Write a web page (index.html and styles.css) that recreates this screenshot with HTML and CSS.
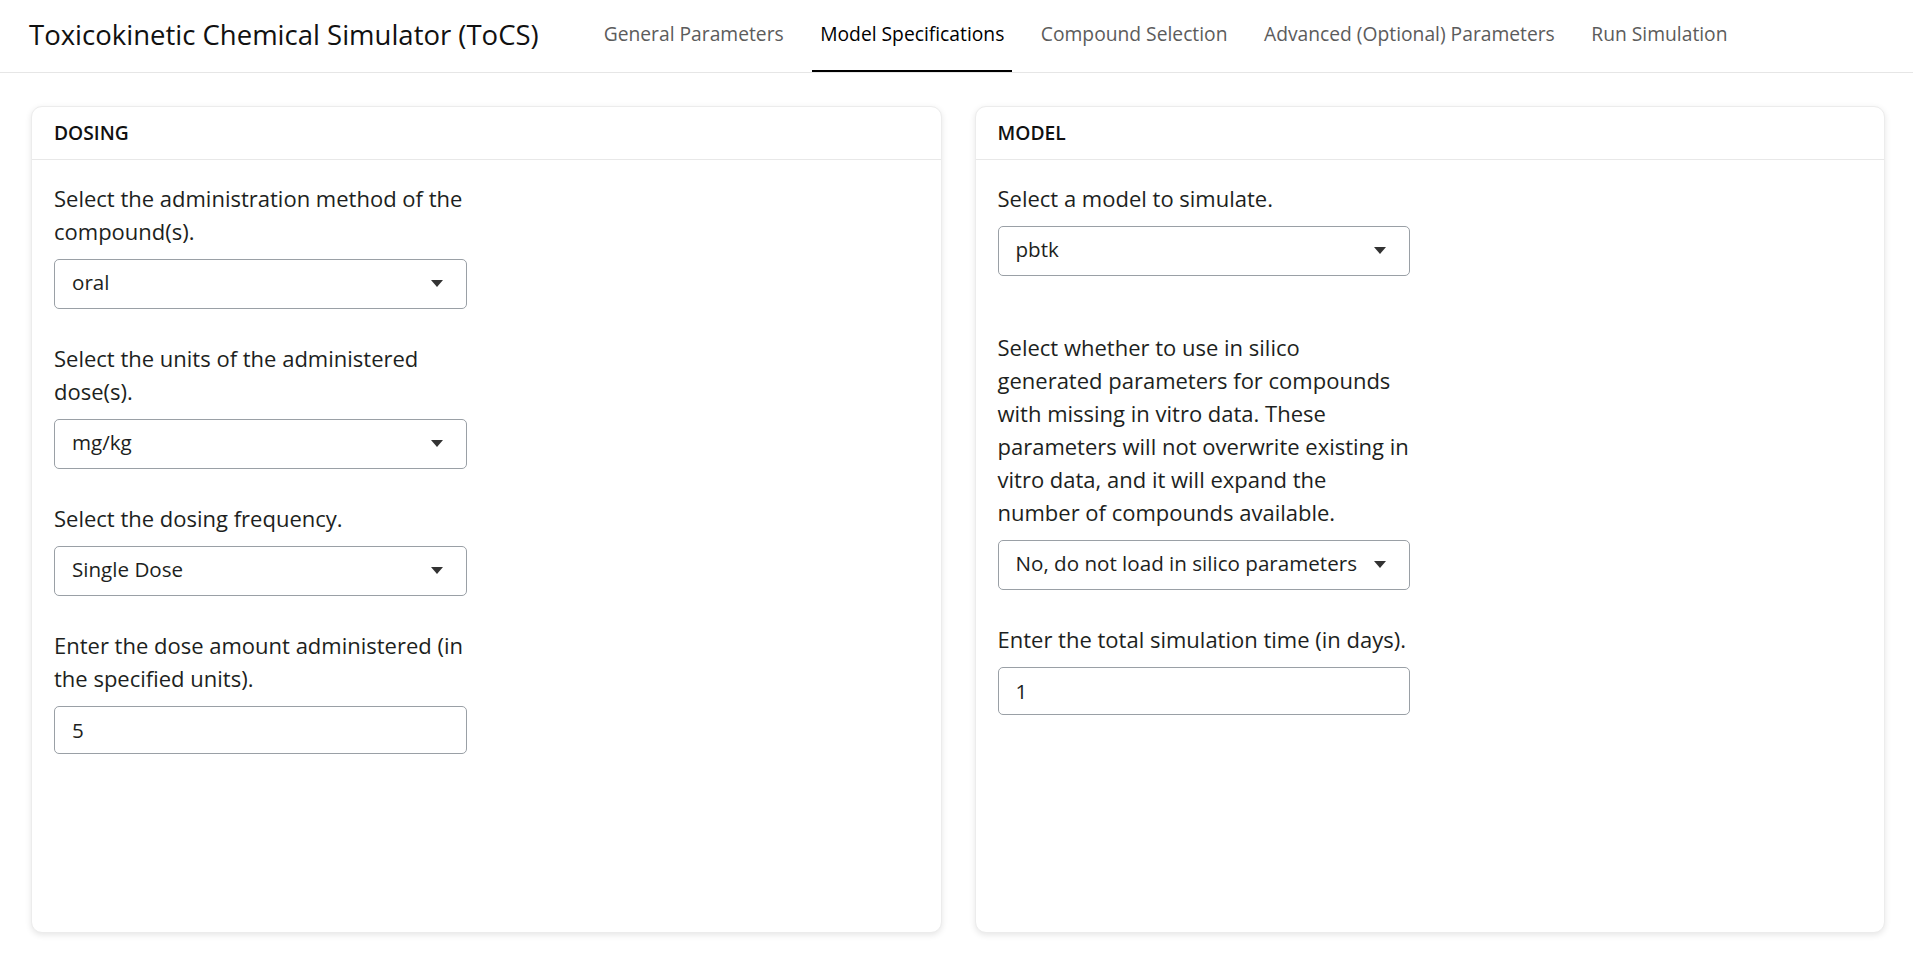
FILE: index.html
```html
<!DOCTYPE html>
<html lang="en">
<head>
<meta charset="utf-8">
<title>Toxicokinetic Chemical Simulator (ToCS)</title>
<link rel="stylesheet" href="styles.css">
</head>
<body>
<header class="navbar">
  <div class="brand">Toxicokinetic Chemical Simulator (ToCS)</div>
  <nav class="nav">
    <a class="nav-link">General Parameters</a>
    <a class="nav-link active">Model Specifications</a>
    <a class="nav-link">Compound Selection</a>
    <a class="nav-link">Advanced (Optional) Parameters</a>
    <a class="nav-link">Run Simulation</a>
  </nav>
</header>
<main class="main">
  <section class="card">
    <div class="card-header">DOSING</div>
    <div class="card-body">
      <div class="form-group">
        <label class="label">Select the administration method of the compound(s).</label>
        <div class="select"><span>oral</span><i class="caret"></i></div>
      </div>
      <div class="form-group">
        <label class="label">Select the units of the administered dose(s).</label>
        <div class="select"><span>mg/kg</span><i class="caret"></i></div>
      </div>
      <div class="form-group">
        <label class="label">Select the dosing frequency.</label>
        <div class="select"><span>Single Dose</span><i class="caret"></i></div>
      </div>
      <div class="form-group">
        <label class="label">Enter the dose amount administered (in the specified units).</label>
        <div class="text-input">5</div>
      </div>
    </div>
  </section>
  <section class="card">
    <div class="card-header">MODEL</div>
    <div class="card-body">
      <div class="form-group">
        <label class="label">Select a model to simulate.</label>
        <div class="select"><span>pbtk</span><i class="caret"></i></div>
      </div>
      <div class="placeholder"></div>
      <div class="form-group">
        <label class="label">Select whether to use in silico generated parameters for compounds with missing in vitro data. These parameters will not overwrite existing in vitro data, and it will expand the number of compounds available.</label>
        <div class="select"><span>No, do not load in silico parameters</span><i class="caret"></i></div>
      </div>
      <div class="form-group">
        <label class="label">Enter the total simulation time (in days).</label>
        <div class="text-input">1</div>
      </div>
    </div>
  </section>
</main>
</body>
</html>
```
FILE: styles.css
```css
html, body {
  height: 100%;
}
body {
  margin: 0;
  font-family: "Open Sans", "DejaVu Sans", sans-serif;
  color: #1d1f21;
  background: #fff;
  display: flex;
  flex-direction: column;
}
.navbar {
  display: flex;
  align-items: center;
  height: 72px;
  border-bottom: 1px solid #e6e6e6;
  padding-left: 29px;
  flex: none;
}
.brand {
  font-size: 27.5px;
  color: #111;
  margin-right: 57px;
  line-height: 1;
  padding-bottom: 3px;
}
.nav {
  display: flex;
  align-self: stretch;
  gap: 20.5px;
}
.nav-link {
  display: flex;
  align-items: center;
  padding: 0 8px 5px;
  font-size: 19.25px;
  color: #5c5c5c;
  box-sizing: border-box;
  height: 72px;
}
.nav-link.active {
  color: #000;
  box-shadow: inset 0 -2px 0 #000;
}
.main {
  flex: 1;
  display: grid;
  grid-template-columns: 1fr 1fr;
  gap: 33px;
  padding: 33px 28px 29px 31px;
  min-height: 0;
}
.card {
  border: 1px solid #ececec;
  border-radius: 11px;
  box-shadow: 0 2px 6px rgba(0, 0, 0, 0.1);
  display: flex;
  flex-direction: column;
  background: #fff;
}
.card-header {
  padding: 12px 22px;
  font-size: 19.25px;
  line-height: 28px;
  font-weight: 600;
  color: #111;
  border-bottom: 1px solid #e8e8e8;
}
.card-body {
  padding: 22px;
  display: flex;
  flex-direction: column;
  gap: 22px;
}
.form-group {
  width: 412.5px;
  margin-bottom: 11px;
}
.placeholder {
  height: 0;
}
.label {
  display: block;
  font-size: 22px;
  line-height: 33px;
  margin-bottom: 11px;
}
.select, .text-input {
  box-sizing: border-box;
  border: 1px solid #9aa0a6;
  border-radius: 5px;
  font-size: 20.6px;
  color: #1d1f21;
  display: flex;
  align-items: center;
  padding: 0 17px;
  white-space: nowrap;
}
.select {
  height: 50px;
  justify-content: space-between;
  padding-bottom: 4px;
}
.select .caret {
  margin-top: 3px;
}
.text-input {
  height: 48px;
}
.caret {
  flex: none;
  width: 0;
  height: 0;
  border-left: 6.5px solid transparent;
  border-right: 6.5px solid transparent;
  border-top: 7px solid #333;
  margin-right: 6px;
}
```
